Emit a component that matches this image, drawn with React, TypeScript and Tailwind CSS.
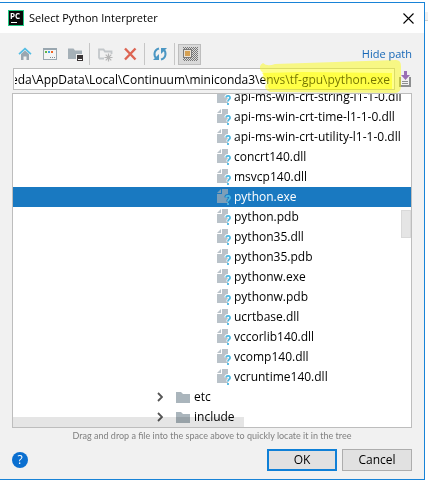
import React from "react";

type FileRow = { name: string; selected?: boolean };

const files: FileRow[] = [
  { name: "api-ms-win-crt-string-l1-1-0.dll" },
  { name: "api-ms-win-crt-time-l1-1-0.dll" },
  { name: "api-ms-win-crt-utility-l1-1-0.dll" },
  { name: "concrt140.dll" },
  { name: "msvcp140.dll" },
  { name: "python.exe", selected: true },
  { name: "python.pdb" },
  { name: "python35.dll" },
  { name: "python35.pdb" },
  { name: "pythonw.exe" },
  { name: "pythonw.pdb" },
  { name: "ucrtbase.dll" },
  { name: "vccorlib140.dll" },
  { name: "vcomp140.dll" },
  { name: "vcruntime140.dll" },
];

const folders = ["etc", "include"];

function AppLogo() {
  return (
    <svg width="16" height="16" viewBox="0 0 16 16" className="shrink-0" fontFamily="Open Sans, sans-serif">
      <rect width="16" height="16" fill="#22cb85" />
      <rect x="1" y="1" width="14" height="14" fill="#0a0a0a" />
      <text x="2" y="9" fontSize="8" fontWeight="700" fill="#fff">PC</text>
      <rect x="3" y="12" width="6" height="1" fill="#fff" />
    </svg>
  );
}

function HomeIcon() {
  return (
    <svg width="16" height="16" viewBox="0 0 16 16">
      <path d="M4 8l4-3.5L12 8v6H9.5v-3.5h-3V14H4z" fill="#9aa7b0" />
      <path d="M2 8.2L8 2.6l6 5.6" fill="none" stroke="#52bde4" strokeWidth="1.6" />
    </svg>
  );
}

function DesktopIcon() {
  return (
    <svg width="16" height="16" viewBox="0 0 16 16">
      <path d="M1 2h14v12H1z" fill="#9aa7b0" />
      <path d="M2 4h12v9H2z" fill="#f4f4f4" />
      <path d="M3 5h2v2H3z" fill="#62b543" />
      <path d="M6 5h2v2H6z" fill="#40a6e0" />
      <path d="M9 5h2v2H9z" fill="#f26522" />
      <path d="M8 11h1v1H8zM10 11h1v1h-1zM12 11h1v1h-1z" fill="#7f8b91" />
    </svg>
  );
}

function ProjectIcon() {
  return (
    <svg width="16" height="16" viewBox="0 0 16 16">
      <path d="M1 2.500h5.500L8 4.500h7V8H9v5H1z" fill="#a5b0b7" />
      <path d="M10 9h6v6h-6z" fill="#3a3536" />
      <path d="M11 13h4v1h-4z" fill="#fff" />
    </svg>
  );
}

function NewFolderIcon() {
  return (
    <svg width="16" height="16" viewBox="0 0 16 16">
      <path d="M2 12.500V3.500h4.500l1.500 2h6.500V8M2 12.500h5" fill="none" stroke="#c3c7ca" strokeWidth="1.800" />
      <path d="M11.500 7.500v8M7.500 11.500h8M8.700 8.700l5.600 5.600M14.300 8.700l-5.600 5.600" stroke="#b5b5b5" strokeWidth="1.200" />
    </svg>
  );
}

function DeleteIcon() {
  return (
    <svg width="16" height="16" viewBox="0 0 16 16">
      <path d="M3 2.500l10.500 11M13.500 2.500L3 13.500" stroke="#dd6553" strokeWidth="2.400" />
    </svg>
  );
}

function RefreshIcon() {
  return (
    <svg width="16" height="16" viewBox="0 0 16 16" fill="none" stroke="#4c97c3" strokeWidth="2">
      <path d="M7 2.500C1.500 4 1.500 10 4.500 12.500" />
      <path d="M9 13.500C14.500 12 14.500 6 11.500 3.500" />
      <path d="M1 14h6V8z" fill="#4c97c3" stroke="none" />
      <path d="M15 2H9v6z" fill="#4c97c3" stroke="none" />
    </svg>
  );
}

function HiddenIcon() {
  return (
    <svg width="16" height="16" viewBox="0 0 16 16">
      <defs>
        <pattern id="dots" width="2" height="2" patternUnits="userSpaceOnUse">
          <path d="M0 0h1v1H0zM1 1h1v1H1z" fill="#777" />
        </pattern>
      </defs>
      <rect x="1" y="1" width="15" height="14" fill="url(#dots)" />
      <rect x="1" y="3" width="9" height="9" fill="#7a7a7a" />
      <rect x="2" y="4" width="7" height="7" fill="#e8e0d4" />
      <rect x="3" y="5" width="5" height="5" fill="#d5a052" />
    </svg>
  );
}

function HistoryIcon() {
  return (
    <svg width="12" height="16" viewBox="0 0 12 16">
      <path d="M1 6v9h10V6" fill="none" stroke="#8d8f90" strokeWidth="2" />
      <path d="M3 10.500h6M3 12.500h6" stroke="#8d8f90" />
      <path d="M5 0h3v4h3L6.500 9 2 4h3z" fill="#9a6fb5" />
    </svg>
  );
}

function FileIcon({ selected }: { selected?: boolean }) {
  return (
    <svg width="16" height="18" viewBox="0 0 16 18" className="shrink-0">
      <path d="M5 1h6v14H0V6h5z" fill={selected ? "#7d9fb8" : "#b9c2c9"} />
      <path d="M4 1v4H0z" fill={selected ? "#7d9fb8" : "#b9c2c9"} />
      <path
        d="M9 9.500C9.500 7 13.500 7.500 13 10c-.3 1.500-2 1.600-2 3.500M11 15v2"
        fill="none"
        stroke={selected ? "#1979c1" : "#ffffff"}
        strokeWidth="3.500"
      />
      <path
        d="M9 9.500C9.500 7 13.500 7.500 13 10c-.3 1.500-2 1.600-2 3.500M11 15v2"
        fill="none"
        stroke="#4fb9e2"
        strokeWidth="1.800"
      />
    </svg>
  );
}

function FolderIcon() {
  return (
    <svg width="14" height="11" viewBox="0 0 14 11" className="shrink-0">
      <path d="M0 0h5l2 2h7v9H0z" fill="#aab5bc" />
    </svg>
  );
}

function ToolButton({ label, children }: { label: string; children: React.ReactNode }) {
  return (
    <button aria-label={label} className="flex size-[25px] items-center justify-center">
      {children}
    </button>
  );
}

function Separator() {
  return <span className="mx-[2px] h-[22px] w-px bg-[#c6c6c6]" />;
}

export default function App() {
  return (
    <div className="flex bg-white pt-[2px] font-['Open_Sans',sans-serif] text-xs text-black">
      <main className="min-w-0 flex-1 border-y border-r border-[#1883d7] bg-[#f1f1f1]">
        <header className="flex h-[30px] items-center bg-white pl-2 pr-[10px]">
          <AppLogo />
          <h1 className="ml-[5px] flex-1 text-[11px]">Select Python Interpreter</h1>
          <button aria-label="Close" className="flex size-3 items-center justify-center">
            <svg width="11" height="11" viewBox="0 0 11 11">
              <path d="M.5.5l10 10M10.500.5l-10 10" stroke="#000" strokeWidth="1.100" />
            </svg>
          </button>
        </header>

        <div className="flex h-[35px] items-center px-3 pt-[7px]">
          <ToolButton label="Home"><HomeIcon /></ToolButton>
          <ToolButton label="Desktop"><DesktopIcon /></ToolButton>
          <ToolButton label="Project"><ProjectIcon /></ToolButton>
          <Separator />
          <ToolButton label="New folder"><NewFolderIcon /></ToolButton>
          <ToolButton label="Delete"><DeleteIcon /></ToolButton>
          <Separator />
          <ToolButton label="Refresh"><RefreshIcon /></ToolButton>
          <Separator />
          <button aria-label="Show hidden files" className="ml-px flex h-[21px] w-[23px] items-center justify-center border border-[#bdbdbd] bg-[#d9d9d9]">
            <HiddenIcon />
          </button>
          <a href="#path" className="ml-auto text-[11px] text-[#1667b7]">Hide path</a>
        </div>

        <div className="relative flex items-center px-[13px]">
          <input
            aria-label="Path"
            readOnly
            dir="rtl"
            defaultValue={"neda\\AppData\\Local\\Continuum\\miniconda3\\envs\\tf-gpu\\python.exe"}
            className="h-[22px] min-w-0 flex-1 border border-[#bdbdbd] bg-white pl-px pr-1 outline-none"
          />
          <button aria-label="Path history" className="ml-1 flex w-3"><HistoryIcon /></button>
          <svg className="pointer-events-none absolute -top-2 right-[22px]" width="142" height="34" viewBox="0 0 142 34">
            <path d="M3 3q4 4 12 1L136 0q5 0 5 6v20q0 7-6 7L10 32q-8-4-3-9l-5-6q3-3 0-5-5-5 1-9z" fill="#ffff00" fillOpacity=".45" />
            <path d="M2 13l40-1 90 1v16l-60 1-62-1q-4-3 0-6z" fill="#ffff00" fillOpacity=".5" style={{ mixBlendMode: "multiply" }} />
          </svg>
        </div>

        <section className="px-3 pt-[3px]">
          <div className="relative flex h-[335px] flex-col justify-end overflow-hidden border border-[#bdbdbd] bg-white">
            {files.map((f) => (
              <div
                key={f.name}
                className={
                  f.selected
                    ? "flex h-5 shrink-0 items-center bg-[#1979c1] pl-[204px] text-white"
                    : "flex h-5 shrink-0 items-center pl-[204px]"
                }
              >
                <FileIcon selected={f.selected} />
                <span className="ml-px">{f.name}</span>
              </div>
            ))}
            {folders.map((name) => (
              <div key={name} className="flex h-5 shrink-0 items-center pl-[144px]">
                <svg width="6" height="10" viewBox="0 0 6 10">
                  <path d="M1 1l4 4-4 4" fill="none" stroke="#555" strokeWidth="1.800" />
                </svg>
                <span className="ml-[13px] flex items-center gap-1">
                  <FolderIcon />
                  {name}
                </span>
              </div>
            ))}
            <span className="absolute right-0 top-[116px] h-[28px] w-[10px] border border-black/5 bg-black/10" />
            <span className="absolute bottom-0 left-0 h-[10px] w-[231px] bg-black/10" />
          </div>
          <p className="text-center font-['Lato','Open_Sans',sans-serif] text-[9px] leading-[15px] text-[#808080]">
            Drag and drop a file into the space above to quickly locate it in the tree
          </p>
        </section>

        <footer className="flex items-center gap-[5px] px-3 pb-2 pt-[6px]">
          <button aria-label="Help" className="mr-auto flex size-4 items-center justify-center rounded-full bg-[#0a6fd0] text-white">?</button>
          <button className="h-[22px] w-[70px] border-2 border-[#0f80d7] bg-[#e1e1e1]">OK</button>
          <button className="h-[22px] w-[70px] border border-[#adadad] bg-[#e1e1e1]">Cancel</button>
        </footer>
      </main>
      <div className="w-[3px] pt-[10px]">
        <div className="h-[9px] border-b border-[#cfcfcf] bg-[#f0f0f0]" />
      </div>
    </div>
  );
}
